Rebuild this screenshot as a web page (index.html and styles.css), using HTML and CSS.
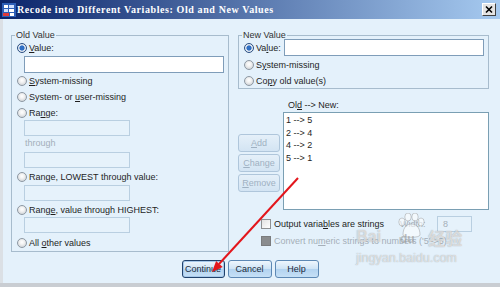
FILE: index.html
```html
<!DOCTYPE html>
<html lang="en">
<head>
  <meta charset="UTF-8" />
  <title>Recode into Different Variables: Old and New Values</title>
  <link rel="stylesheet" href="styles.css">
</head>
<body>
  <div class="window">
    <div class="titlebar">
      <svg class="app-icon" viewBox="0 0 14 14">
        <rect x="0" y="0" width="14" height="14" fill="#2d5fb8"/>
        <rect x="2" y="2" width="4" height="3" fill="#fff"/>
        <rect x="7" y="2" width="5" height="3" fill="#cfe0ff"/>
        <rect x="2" y="6" width="4" height="3" fill="#cfe0ff"/>
        <rect x="7" y="6" width="5" height="3" fill="#fff"/>
        <rect x="1" y="10" width="6" height="3" fill="#e03a3a"/>
        <rect x="8" y="10" width="4" height="3" fill="#fff"/>
      </svg>
      <span class="title">Recode into Different Variables: Old and New Values</span>
      <span class="close">
        <svg viewBox="0 0 12 11"><path d="M3 2.5 L9 8.5 M9 2.5 L3 8.5" stroke="#000" stroke-width="1.6"/></svg>
      </span>
    </div>

    <div class="content">
      <div class="columns">
        <div class="group old-group">
          <div class="group-title">Old Value</div>
          <div class="opt first"><span class="radio on"></span><span><u>V</u>alue:</span></div>
          <div class="field wide"></div>
          <div class="opt"><span class="radio"></span><span><u>S</u>ystem-missing</span></div>
          <div class="opt"><span class="radio"></span><span>System- or <u>u</u>ser-missing</span></div>
          <div class="opt"><span class="radio"></span><span>Ra<u>n</u>ge:</span></div>
          <div class="field off"></div>
          <div class="through">through</div>
          <div class="field off spaced"></div>
          <div class="opt"><span class="radio"></span><span>Ran<u>g</u>e, LOWEST through value:</span></div>
          <div class="field off spaced"></div>
          <div class="opt"><span class="radio"></span><span>Rang<u>e</u>, value through HIGHEST:</span></div>
          <div class="field off"></div>
          <div class="opt last"><span class="radio"></span><span>All <u>o</u>ther values</span></div>
        </div>

        <div class="right">
          <div class="group new-group">
            <div class="group-title">New Value</div>
            <div class="opt with-field"><span class="radio on"></span><span>Va<u>l</u>ue:</span><span class="field grow"></span></div>
            <div class="opt"><span class="radio"></span><span>S<u>y</u>stem-missing</span></div>
            <div class="opt"><span class="radio"></span><span>Co<u>p</u>y old value(s)</span></div>
          </div>

          <div class="mapping">
            <div class="side-buttons">
              <span class="btn off"><u>A</u>dd</span>
              <span class="btn off"><u>C</u>hange</span>
              <span class="btn off"><u>R</u>emove</span>
            </div>
            <div class="list-col">
              <div class="list-label">Ol<u>d</u> --&gt; New:</div>
              <div class="list">
                <div>1 --&gt; 5</div>
                <div>2 --&gt; 4</div>
                <div>4 --&gt; 2</div>
                <div>5 --&gt; 1</div>
              </div>
            </div>
          </div>

          <div class="check-row">
            <span class="checkbox"></span>
            <span class="check-label">Output varia<u>b</u>les are strings</span>
            <span class="width-label">Width:</span>
            <span class="field width-field">8</span>
          </div>
          <div class="check-row second">
            <span class="checkbox dim"></span>
            <span class="check-label dim-text">Convert nu<u>m</u>eric strings to numbers ('5'-&gt;5)</span>
          </div>
        </div>
      </div>

      <div class="actions">
        <span class="btn default">Continue</span>
        <span class="btn">Cancel</span>
        <span class="btn">Help</span>
      </div>
    </div>

    <div class="watermark">
      <svg class="paw" viewBox="0 0 28 26">
        <ellipse cx="5" cy="9" rx="3.2" ry="4"/>
        <ellipse cx="11" cy="4" rx="3.2" ry="4"/>
        <ellipse cx="18" cy="4" rx="3.2" ry="4"/>
        <ellipse cx="24" cy="9" rx="3.2" ry="4"/>
        <path d="M6 22 C6 14 10 11 14.5 11 C19 11 23 14 23 22 C23 25 6 25 6 22 Z"/>
      </svg>
      <span class="wm-bai">Bai</span>
      <span class="wm-du">du</span>
      <span class="wm-jy">经验</span>
      <span class="wm-url">jingyan.baidu.com</span>
    </div>

    <svg class="arrow" viewBox="0 0 500 287">
      <line x1="298" y1="178" x2="219" y2="264" stroke="#e3161c" stroke-width="2"/>
      <polygon points="212,272 216.1,260.9 222.7,266.9" fill="#e3161c"/>
    </svg>
  </div>
</body>
</html>
```

FILE: styles.css
```css
body {
  margin: 0;
  background: #fff;
  font-family: "Liberation Sans", Arial, sans-serif;
  font-size: 9px;
  color: #1e1e1e;
}

.window {
  position: relative;
  width: 500px;
  height: 287px;
  overflow: hidden;
  background: #e4f1fb;
  display: flex;
  flex-direction: column;
  box-sizing: border-box;
  border-bottom: 4px solid #c9cdd2;
}

.titlebar {
  height: 19px;
  display: flex;
  align-items: center;
  padding: 0 4px 0 2px;
  box-sizing: border-box;
  background: linear-gradient(to right, #0a246a, #a6caf0);
}

.app-icon {
  width: 14px;
  height: 14px;
  margin-right: 1px;
  flex: none;
}

.title {
  flex: 1;
  color: #fff;
  font-family: "Liberation Serif", serif;
  font-weight: bold;
  font-size: 10px;
  letter-spacing: 0.6px;
  white-space: nowrap;
}

.close {
  width: 12px;
  height: 11px;
  background: #e4e4e4;
  border: 1px solid;
  border-color: #fff #404040 #404040 #fff;
  display: flex;
}

.close svg {
  width: 12px;
  height: 11px;
}

.content {
  flex: 1;
  display: flex;
  flex-direction: column;
  border-left: 3px solid #dbe0e5;
  padding: 16px 0 0 8px;
}

.columns {
  display: flex;
  gap: 9px;
}

.group {
  border: 1px solid #a7bccd;
  box-sizing: border-box;
}

.group-title {
  width: fit-content;
  height: 11px;
  line-height: 11px;
  margin: -6px 0 0 3px;
  padding: 0 1px;
  background: #e4f1fb;
  color: #333;
}

.old-group {
  width: 218px;
  padding-bottom: 1px;
}

.opt {
  display: flex;
  align-items: center;
  height: 15px;
  margin: 1px 0 0 5px;
  white-space: nowrap;
}

.opt.first {
  height: 13px;
  margin-top: 0;
}

.opt.last {
  margin-top: 2px;
}

.old-group .field.wide + .opt {
  margin-top: 0;
}

.radio {
  width: 10px;
  height: 10px;
  margin-right: 2px;
  flex: none;
  box-sizing: border-box;
  border-radius: 50%;
  border: 1px solid #8d98a3;
  background: radial-gradient(circle at 50% 40%, #fff 0, #f2f2f2 35%, #c3c8cd 100%);
}

.radio.on {
  border-color: #2b4f82;
  background: radial-gradient(circle, #2f6fc4 0, #2f6fc4 2.2px, #e8eef6 3px, #c9d3de 100%);
}

.field {
  display: block;
  box-sizing: border-box;
  background: #fff;
  border: 1px solid #7f9db9;
}

.field.wide {
  height: 17px;
  margin: 2px 4px 0 12px;
}

.field.off {
  width: 106px;
  height: 16px;
  margin-left: 12px;
  background: #e6f2fb;
  border-color: #b9cfe1;
}

.field.off.spaced {
  margin-top: 1px;
}

.through {
  height: 15px;
  line-height: 15px;
  margin-left: 13px;
  color: #a3afba;
}

.right {
  width: 251px;
  display: flex;
  flex-direction: column;
}

.new-group .group-title {
  margin-bottom: -3px;
}

.opt.with-field {
  height: 17px;
}

.field.grow {
  flex: 1;
  height: 17px;
  margin: 0 4px 0 3px;
}

.mapping {
  display: flex;
}

.side-buttons {
  width: 42px;
  margin: 45px 3px 0 0;
  display: flex;
  flex-direction: column;
  gap: 2px;
}

.list-col {
  display: flex;
  flex-direction: column;
}

.list-label {
  height: 12px;
  line-height: 12px;
  margin: 10px 0 0 5px;
}

.list {
  width: 206px;
  height: 98px;
  margin-top: 1px;
  padding: 1px 2px;
  box-sizing: border-box;
  background: #fff;
  border: 1px solid #7a9fb3;
  line-height: 12.5px;
}

.check-row {
  display: flex;
  align-items: center;
  height: 16px;
  margin: 6px 0 0 23px;
  white-space: nowrap;
}

.check-row.second {
  height: 15px;
  margin-top: 1px;
}

.checkbox {
  width: 10px;
  height: 10px;
  flex: none;
  box-sizing: border-box;
  border: 1px solid #8e9092;
  background: linear-gradient(135deg, #e2e2e2, #fff);
  margin-right: 3px;
}

.checkbox.dim {
  background: #8a8c8e;
  border-color: #7a7c7e;
}

.check-label {
  width: 126px;
}

.dim-text {
  color: #a5afb8;
}

.width-label {
  width: 37px;
  color: #a5afb8;
}

.width-field {
  width: 35px;
  height: 16px;
  padding-left: 5px;
  line-height: 14px;
  color: #a5afb8;
  background: #e6f2fb;
  border-color: #b9cfe1;
}

.actions {
  display: flex;
  justify-content: center;
  gap: 3px;
  margin-top: 8px;
  padding-right: 11px;
}

.btn {
  height: 18px;
  width: 44px;
  box-sizing: border-box;
  display: flex;
  align-items: center;
  justify-content: center;
  border: 1px solid #5d88b4;
  border-radius: 3px;
  background: linear-gradient(#eef6fd, #cfe4f6 48%, #b3d3f0 52%, #c6e0f6);
  color: #1a2a3a;
  white-space: nowrap;
}

.btn.default {
  width: 43px;
  border-color: #20426c;
  box-shadow: inset 0 0 0 1px #a6c8ea;
}

.btn.off {
  width: 42px;
  color: #9fb1c2;
  border-color: #afc6db;
  background: linear-gradient(#e5f0f9, #d3e4f3);
}

.watermark {
  position: absolute;
  left: 0;
  top: 0;
  width: 500px;
  height: 287px;
  pointer-events: none;
  color: rgba(255, 255, 255, 0.6);
  text-shadow: 0 0 1px rgba(90, 90, 90, 0.55);
  font-weight: bold;
}

.watermark span {
  position: absolute;
  white-space: nowrap;
}

.paw {
  position: absolute;
  left: 397px;
  top: 213px;
  width: 28px;
  height: 26px;
  fill: rgba(255, 255, 255, 0.55);
  stroke: rgba(120, 120, 120, 0.45);
  stroke-width: 0.8;
}

.wm-bai {
  left: 356px;
  top: 228px;
  font-size: 16px;
}

.wm-du {
  left: 400px;
  top: 232px;
  font-size: 12px;
  color: rgba(150, 150, 150, 0.6);
  text-shadow: none;
}

.wm-jy {
  left: 428px;
  top: 228px;
  font-size: 17px;
  font-family: "Noto Sans CJK SC", sans-serif;
  line-height: 20px;
}

.wm-url {
  left: 356px;
  top: 251px;
  font-size: 12.5px;
  font-weight: normal;
}

.arrow {
  position: absolute;
  left: 0;
  top: 0;
  width: 500px;
  height: 287px;
  pointer-events: none;
}
```
